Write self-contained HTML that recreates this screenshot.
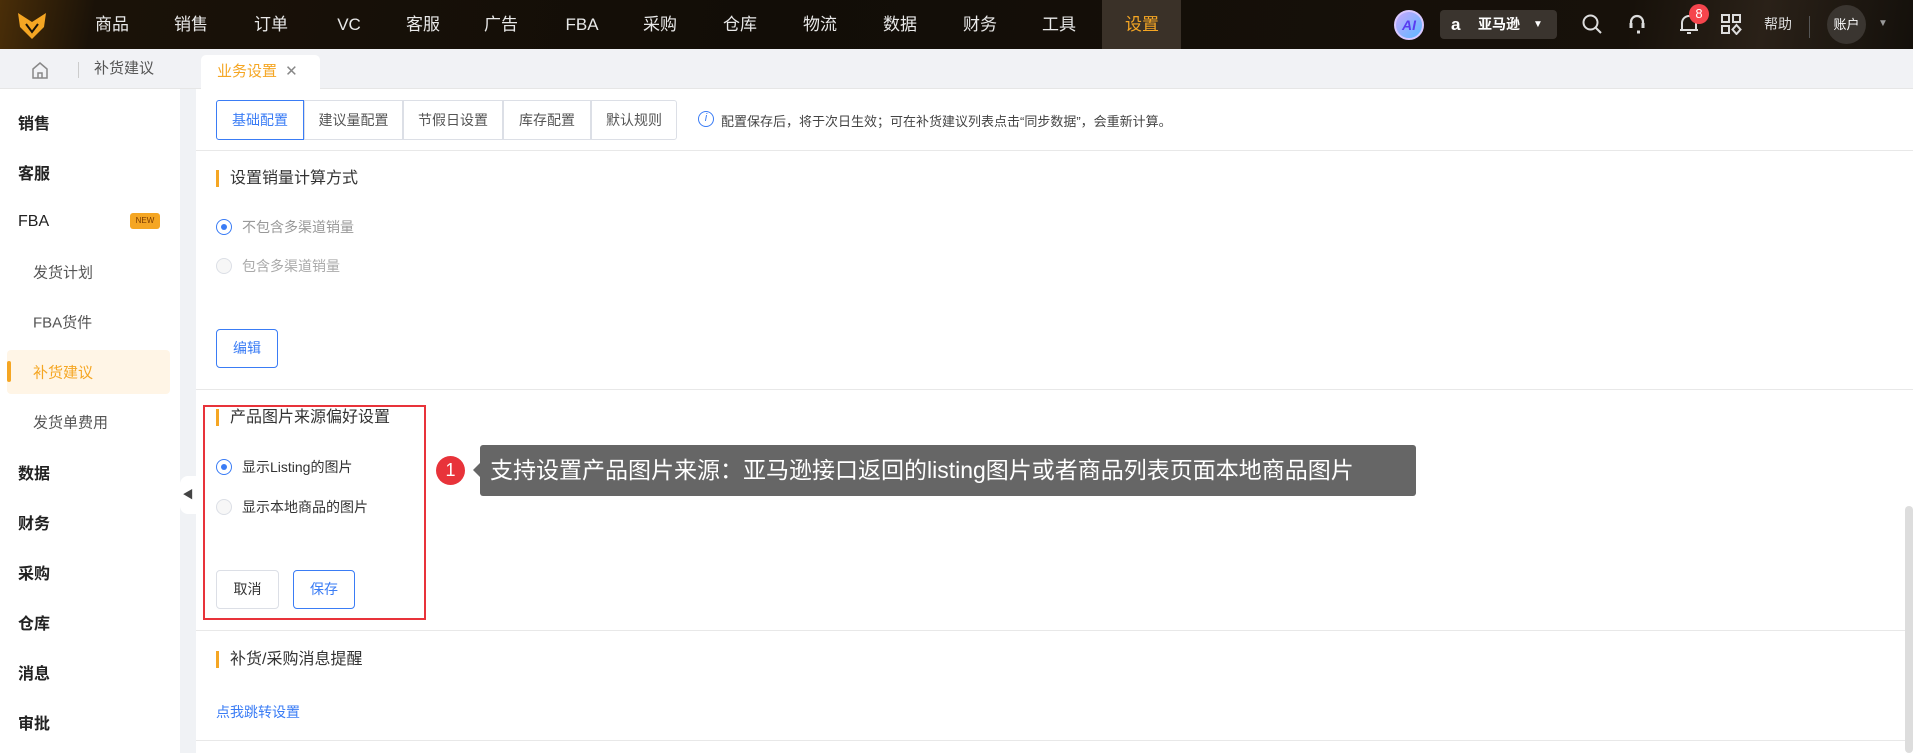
<!DOCTYPE html>
<html><head><meta charset="utf-8">
<style>
*{box-sizing:border-box;margin:0;padding:0}
body{width:1913px;height:753px;overflow:hidden;font-family:"Liberation Sans","Noto Sans CJK SC",sans-serif;background:#f0f2f5;position:relative;color:#333}
.abs{position:absolute}
.nav{left:0;top:0;width:1913px;height:49px;background:linear-gradient(100deg,#4a2e08 0,#1a1208 5%,#120d07 40%,#17110a 85%,#2a2118 92%,#14100b 100%)}
.nav .it{position:absolute;top:0;height:49px;line-height:49px;color:#e8e8e8;font-size:17px;transform:translateX(-50%)}
.tabbar{left:0;top:49px;width:1913px;height:40px;background:#f1f2f5;border-bottom:1px solid #e6e6e6}
.side{left:0;top:89px;width:180px;height:664px;background:#fff}
.side .s{position:absolute;left:18px;font-size:16px;color:#222;font-weight:bold;transform:translateY(-50%)}
.side .c{position:absolute;left:33px;font-size:15px;color:#555;transform:translateY(-50%)}
.main{left:196px;top:89px;width:1717px;height:664px;background:#fff}
.seg{position:absolute;top:100px;height:40px;border:1px solid #dcdfe6;font-size:14px;color:#555;line-height:38px;text-align:center}
.title{position:absolute;font-size:16px;color:#333;padding-left:11px;border-left:3px solid #f5a623;line-height:17px}
.radio{position:absolute;width:16px;height:16px;border-radius:50%;border:1px solid #dcdfe6;background:#f7f7f7}
.radio.on{border-color:#3a7cf5;background:#fff}
.radio.on::after{content:"";position:absolute;left:4px;top:4px;width:6px;height:6px;border-radius:50%;background:#3a7cf5}
.rl{position:absolute;font-size:14px;transform:translateY(-50%)}
.btn{position:absolute;border:1px solid #dcdfe6;border-radius:4px;font-size:14px;text-align:center;background:#fff}
.hr{position:absolute;left:196px;width:1717px;height:1px;background:#e8e8e8}
</style></head><body>
<div class="abs nav">
  <svg class="abs" style="left:17px;top:12px" width="30" height="28" viewBox="0 0 30 28"><path d="M1 1 L15 10 L29 1 L27 15 L15 27 L3 15Z" fill="#f5a623"/><path d="M9 12 L15 20 L21 12" fill="none" stroke="#1a1208" stroke-width="2"/></svg>
  <div class="it" style="left:112px">商品</div><div class="it" style="left:191px">销售</div><div class="it" style="left:271px">订单</div><div class="it" style="left:349px">VC</div><div class="it" style="left:423px">客服</div><div class="it" style="left:501px">广告</div><div class="it" style="left:582px">FBA</div><div class="it" style="left:660px">采购</div><div class="it" style="left:740px">仓库</div><div class="it" style="left:820px">物流</div><div class="it" style="left:900px">数据</div><div class="it" style="left:980px">财务</div><div class="it" style="left:1059px">工具</div>
  <div class="abs" style="left:1102px;top:0;width:79px;height:49px;background:#3a3128"></div>
  <div class="it" style="left:1142px;color:#f5a623">设置</div>
  <div class="abs" style="left:1394px;top:10px;width:30px;height:30px;border-radius:50%;background:linear-gradient(135deg,#c8a8ff,#5ab8ff);border:2px solid #d8c8ff;color:#5a3cf0;font-weight:bold;font-style:italic;font-size:14px;line-height:26px;text-align:center">AI</div>
  <div class="abs" style="left:1440px;top:10px;width:117px;height:29px;border-radius:4px;background:#3a342e;color:#fff;font-size:14px;line-height:29px"><span style="position:absolute;left:11px;font-weight:bold;font-size:17px">a</span><span style="position:absolute;left:38px;font-weight:bold">亚马逊</span><span style="position:absolute;left:93px;font-size:10px">▼</span></div>
  <svg class="abs" style="left:1581px;top:13px" width="22" height="22" viewBox="0 0 22 22"><circle cx="9.5" cy="9.5" r="7" fill="none" stroke="#ddd" stroke-width="2"/><path d="M15 15l5 5" stroke="#ddd" stroke-width="2"/></svg>
  <svg class="abs" style="left:1626px;top:12px" width="22" height="24" viewBox="0 0 22 24"><path d="M5 15V10a6 6 0 0 1 12 0v5" fill="none" stroke="#ddd" stroke-width="2.2"/><path d="M5 11v5M17 11v5M11 20h3" stroke="#ddd" stroke-width="3"/></svg>
  <svg class="abs" style="left:1678px;top:11px" width="22" height="26" viewBox="0 0 22 26"><path d="M4 19V12a7 7 0 0 1 14 0v7M2 19h18M9 22h4" fill="none" stroke="#ddd" stroke-width="2"/></svg>
  <div class="abs" style="left:1689px;top:4px;width:20px;height:20px;border-radius:50%;background:#f5454d;color:#fff;font-size:13px;line-height:20px;text-align:center">8</div>
  <svg class="abs" style="left:1721px;top:14px" width="21" height="21" viewBox="0 0 21 21"><g fill="none" stroke="#ddd" stroke-width="2"><rect x="1" y="1" width="7" height="7"/><rect x="12" y="1" width="7" height="7"/><rect x="1" y="12" width="7" height="7"/><path d="M15.5 11l4 4.5-4 4.5-4-4.5z"/></g></svg>
  <div class="abs" style="left:1764px;top:0;line-height:49px;color:#ddd;font-size:14px">帮助</div>
  <div class="abs" style="left:1809px;top:16px;width:1px;height:22px;background:#555"></div>
  <div class="abs" style="left:1827px;top:5px;width:39px;height:39px;border-radius:50%;background:#3a3530;color:#fff;font-size:13px;line-height:39px;text-align:center">账户</div>
  <div class="abs" style="left:1878px;top:18px;color:#999;font-size:10px">▼</div>
</div>
<div class="abs tabbar">
  <svg class="abs" style="left:31px;top:12px" width="18" height="18" viewBox="0 0 18 18"><path d="M2 8L9 2l7 6v9H2z M7 17v-5h4v5" fill="none" stroke="#888" stroke-width="1.5"/></svg>
  <div class="abs" style="left:78px;top:13px;width:1px;height:16px;background:#ccc"></div>
  <div class="abs" style="left:94px;top:0;line-height:40px;font-size:15px;color:#555">补货建议</div>
  <div class="abs" style="left:201px;top:6px;width:119px;height:35px;background:#fff;border-radius:5px 5px 0 0;font-size:15px;color:#f5a623;line-height:34px;padding-left:16px">业务设置 <span style="color:#888;margin-left:4px">✕</span></div>
</div>
<div class="abs side">
  <div class="s" style="top:33px">销售</div><div class="s" style="top:83px">客服</div>
  <div class="s" style="top:133px;font-weight:normal">FBA</div>
  <div class="abs" style="left:130px;top:124px;width:30px;height:16px;background:#f5a623;border-radius:3px;font-size:8px;color:#7a3a00;text-align:center;line-height:16px">NEW</div>
  <div class="c" style="top:183px">发货计划</div><div class="c" style="top:233px">FBA货件</div>
  <div class="abs" style="left:7px;top:261px;width:163px;height:44px;background:#fff5e6;border-radius:4px"></div>
  <div class="abs" style="left:7px;top:272px;width:4px;height:21px;background:#f5a623;border-radius:2px"></div>
  <div class="c" style="top:283px;color:#f5a623">补货建议</div>
  <div class="c" style="top:333px">发货单费用</div>
  <div class="s" style="top:383px">数据</div><div class="s" style="top:433px">财务</div><div class="s" style="top:483px">采购</div><div class="s" style="top:533px">仓库</div><div class="s" style="top:583px">消息</div><div class="s" style="top:633px">审批</div>
</div>
<div class="abs" style="left:180px;top:476px;width:16px;height:38px;background:#fff;border-radius:8px 0 0 8px;color:#444;font-size:11px;line-height:38px;text-align:center">◀</div>
<div class="abs main"></div>
<div class="seg" style="left:216px;width:88px;border-color:#3a7cf5;color:#3a7cf5;border-radius:3px 0 0 3px">基础配置</div>
<div class="seg" style="left:304px;width:99px">建议量配置</div>
<div class="seg" style="left:403px;width:100px">节假日设置</div>
<div class="seg" style="left:503px;width:88px">库存配置</div>
<div class="seg" style="left:591px;width:86px;border-radius:0 3px 3px 0">默认规则</div>
<div class="abs" style="left:698px;top:111px;width:16px;height:16px;border:1.5px solid #3a7cf5;border-radius:50%;color:#3a7cf5;font-size:11px;line-height:13px;text-align:center;font-style:italic">i</div>
<div class="abs" style="left:721px;top:111px;font-size:13px;color:#444">配置保存后，将于次日生效；可在补货建议列表点击“同步数据”，会重新计算。</div>
<div class="hr" style="top:150px"></div>
<div class="title" style="left:216px;top:170px">设置销量计算方式</div>
<div class="radio on" style="left:216px;top:219px"></div><div class="rl" style="left:242px;top:227px;color:#999">不包含多渠道销量</div>
<div class="radio" style="left:216px;top:258px"></div><div class="rl" style="left:242px;top:266px;color:#aaa">包含多渠道销量</div>
<div class="btn" style="left:216px;top:329px;width:62px;height:39px;line-height:37px;border-color:#3a7cf5;color:#3a7cf5">编辑</div>
<div class="hr" style="top:389px"></div>
<div class="abs" style="left:203px;top:405px;width:223px;height:215px;border:2px solid #e8333a"></div>
<div class="title" style="left:216px;top:409px">产品图片来源偏好设置</div>
<div class="radio on" style="left:216px;top:459px"></div><div class="rl" style="left:242px;top:467px">显示Listing的图片</div>
<div class="radio" style="left:216px;top:499px"></div><div class="rl" style="left:242px;top:507px">显示本地商品的图片</div>
<div class="btn" style="left:216px;top:570px;width:63px;height:39px;line-height:37px">取消</div>
<div class="btn" style="left:293px;top:570px;width:62px;height:39px;line-height:37px;border-color:#3a7cf5;color:#3a7cf5">保存</div>
<div class="abs" style="left:436px;top:456px;width:29px;height:29px;border-radius:50%;background:#e8333a;color:#fff;font-size:18px;line-height:29px;text-align:center">1</div>
<div class="abs" style="left:473px;top:462px;width:0;height:0;border-top:8px solid transparent;border-bottom:8px solid transparent;border-right:8px solid #666"></div>
<div class="abs" style="left:480px;top:445px;width:936px;height:51px;background:#666;border-radius:3px;color:#fff;font-size:23px;line-height:51px;padding-left:10px">支持设置产品图片来源：亚马逊接口返回的listing图片或者商品列表页面本地商品图片</div>
<div class="hr" style="top:630px"></div>
<div class="title" style="left:216px;top:651px">补货/采购消息提醒</div>
<div class="abs" style="left:216px;top:702px;font-size:14px;color:#3a7cf5">点我跳转设置</div>
<div class="hr" style="top:740px"></div>
<div class="abs" style="left:1905px;top:506px;width:8px;height:247px;background:#ddd;border-radius:4px"></div>
</body></html>
